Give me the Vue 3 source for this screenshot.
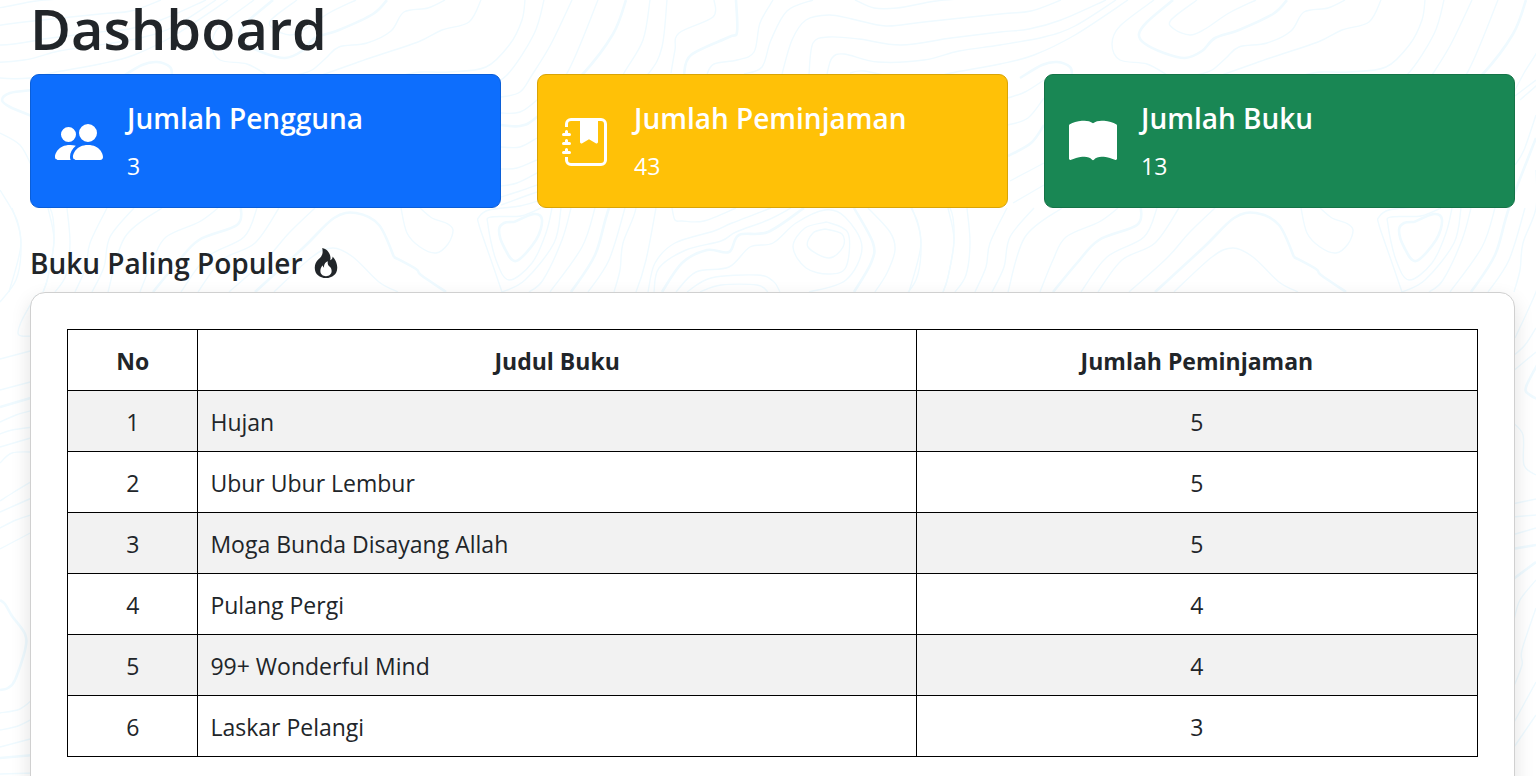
<script setup>
const cards = [
  {
    title: 'Jumlah Pengguna',
    value: 3,
    tone: 'blue',
    paths: [
      'M7 14s-1 0-1-1 1-4 5-4 5 3 5 4-1 1-1 1zm4-6a3 3 0 1 0 0-6 3 3 0 0 0 0 6m-5.784 6A2.24 2.24 0 0 1 5 13c0-1.355.68-2.75 1.936-3.72A6.3 6.3 0 0 0 5 9c-4 0-5 3-5 4s1 1 1 1zM4.5 8a2.5 2.5 0 1 0 0-5 2.5 2.5 0 0 0 0 5',
    ],
  },
  {
    title: 'Jumlah Peminjaman',
    value: 43,
    tone: 'yellow',
    paths: [
      'M6 1h6v7a.5.5 0 0 1-.757.429L9 7.083 6.757 8.43A.5.5 0 0 1 6 8z',
      'M3 0h10a2 2 0 0 1 2 2v12a2 2 0 0 1-2 2H3a2 2 0 0 1-2-2v-1h1v1a1 1 0 0 0 1 1h10a1 1 0 0 0 1-1V2a1 1 0 0 0-1-1H3a1 1 0 0 0-1 1v1H1V2a2 2 0 0 1 2-2',
      'M1 5v-.5a.5.5 0 0 1 1 0V5h.5a.5.5 0 0 1 0 1h-2a.5.5 0 0 1 0-1zm0 3v-.5a.5.5 0 0 1 1 0V8h.5a.5.5 0 0 1 0 1h-2a.5.5 0 0 1 0-1zm0 3v-.5a.5.5 0 0 1 1 0v.5h.5a.5.5 0 0 1 0 1h-2a.5.5 0 0 1 0-1z',
    ],
  },
  {
    title: 'Jumlah Buku',
    value: 13,
    tone: 'green',
    paths: [
      'M8 1.783C7.015.936 5.587.81 4.287.94c-1.514.153-3.042.672-3.994 1.105A.5.5 0 0 0 0 2.5v11a.5.5 0 0 0 .707.455c.882-.4 2.303-.881 3.68-1.02 1.409-.142 2.59.087 3.223.877a.5.5 0 0 0 .78 0c.633-.79 1.814-1.019 3.222-.877 1.378.139 2.8.62 3.681 1.02A.5.5 0 0 0 16 13.5v-11a.5.5 0 0 0-.293-.455c-.952-.433-2.48-.952-3.994-1.105C10.413.809 8.985.936 8 1.783',
    ],
  },
]

const books = [
  { title: 'Hujan', loans: 5 },
  { title: 'Ubur Ubur Lembur', loans: 5 },
  { title: 'Moga Bunda Disayang Allah', loans: 5 },
  { title: 'Pulang Pergi', loans: 4 },
  { title: '99+ Wonderful Mind', loans: 4 },
  { title: 'Laskar Pelangi', loans: 3 },
]

// Contour lines of one 900px tile, as x,y points joined by smooth curves.
const thin = [
  '254,0 220,26 212,44 220,60 247,64 267,75',
  '297,0 271,20 274,29 290,35 305,29 329,13 356,0',
  '445,0 428,8 404,12 391,31 367,43 339,47 326,58 312,70 297,75',
  '481,0 469,22 442,30 418,42 370,58 322,75',
  '525,0 522,20 510,44 486,67 449,72 421,72 403,75',
  '544,0 534,34 507,75 480,90',
  '572,0 551,44 532,75 520,92 501,97 480,98',
  '598,0 566,75 537,100 520,112 501,113 480,110',
  '650,0 643,40 624,73 610,100',
  '667,0 662,47 649,73 620,100',
  '714,0 713,17 679,33 675,50 671,73',
  '773,0 760,23 754,52 737,60 714,64 707,74',
  '813,0 787,11 771,40 762,67 744,74',
  '782,74 792,40 806,20 829,15 852,19 886,26 924,22 1000,14 1031,11 1061,0',
  '809,74 813,43 829,37 859,39 901,45 951,38 1000,32 1029,29 1061,20 1106,0',
  '827,74 832,58 844,54 878,62 924,60 959,51 1000,45 1044,37 1075,26 1116,0',
  '850,73 864,71 900,78 930,78 951,73 1000,64 1034,55 1075,35 1128,0',
  '855,0 874,8 897,8 936,1 974,-2',
  '0,133 20,145 32,167',
  '0,190 17,220 21,250 16,280 0,302',
  '32,200 50,208 54,240 48,277 43,292',
  '108,98 125,92 144,80',
  '108,125 128,118 144,98',
  '110,181 144,163',
  '113,203 144,185',
  '537,138 520,147 501,147',
  '537,160 517,168 501,169',
  '537,173 517,183 501,186',
  '537,185 520,191 501,197',
  '537,192 520,198 501,205',
  '636,80 615,96',
  '636,115 624,150 615,165',
  '401,208 407,233 420,247 436,253 448,244 453,230 446,223 432,218 420,208',
  '541,200 520,206 489,210 479,217 479,225 491,260 502,292',
  '541,208 521,216 491,217 488,225 496,260 509,280 532,263 546,233 552,208',
  '561,208 554,243 525,280 502,292',
  '571,208 562,240 543,280 529,292',
  '595,208 582,247 550,292',
  '625,208 609,260 588,292',
  '636,170 636,208 623,243 620,270 614,292',
  '656,208 646,260 636,292 615,338',
  '736,208 704,221 682,221 675,220 672,208',
  '771,208 732,223 714,231 675,243 655,263 648,292',
  '791,208 768,220 736,232 721,241 686,250 659,268 654,292',
  '676,292 696,272 729,267 750,247 773,243 796,223 825,210 845,217 862,247 846,280 809,292',
  '825,229 842,234 843,247 829,258 808,247 813,233 825,229',
  '827,222 848,233 846,267 829,274 806,268 793,247 805,228 827,222',
  '687,292 711,278 757,275 773,281 780,292',
  '700,292 721,285 757,285 768,292',
  '868,208 890,232 895,250 887,273 875,292',
  '912,208 921,243 909,292',
  '948,208 954,240 948,277 943,292',
  '67,208 70,243 66,275 55,292',
  '107,208 90,243 86,267 75,292',
  '134,208 110,237 104,267 92,292',
  '162,208 125,237 108,292',
  '218,208 199,222 166,237 153,260 140,292',
  '257,208 244,237 207,257 181,292',
  '279,208 255,243 222,260 198,292',
  '315,208 289,233 267,258 229,292',
  '274,292 312,257 333,248 353,257 379,282 398,292',
  '36,295 22,320 18,333 22,336 34,336',
  '0,359 34,350',
  '0,390 34,381',
  '0,422 16,415 34,410',
  '0,434 12,430 34,427',
  '0,447 34,437',
  '0,463 12,453 34,452',
  '0,501 14,492 34,480',
  '0,512 34,497',
  '0,528 16,520 34,514',
  '0,549 34,531',
  '0,713 20,709 34,698',
  '0,730 18,726 34,718',
  '0,747 34,738',
  '0,774 34,773',
  '636,328 625,345 612,357',
  '636,352 612,372',
  '612,422 623,435 624,465 636,475',
  '612,504 636,499',
  '612,517 636,515',
  '612,535 636,528',
  '636,580 620,600 614,620',
  '636,608 622,650 622,665 614,686',
  '636,682 612,726',
  '636,715 612,750',
]
const thick = [
  '273,0 247,22 239,34 244,43 264,53 285,58 302,51 315,38 339,30 373,14 387,0',
  '626,0 613,34 582,75 537,117 520,126 501,125',
  '736,0 737,32 729,37 691,55 684,74',
  '120,78 142,65 157,62 170,67 172,76',
  '32,90 10,93 2,100 10,107 32,116',
  '108,156 131,143 144,125',
  '636,138 609,208 595,255 571,292',
  '394,257 416,269 421,275 446,292',
  '514,222 534,214 542,220 536,240 516,261 504,247 499,230 504,223 514,222',
  '804,208 768,232 739,235 729,252 707,250 682,263 662,292',
  '854,208 873,243 871,263 854,292',
  '241,208 237,225 199,240 177,263 153,292',
  '255,292 304,247 334,218 356,213 379,225 394,257',
  '0,407 34,397',
  '0,600 5,604 12,616 25,634 25,650 15,680 8,688 0,690',
  '0,758 34,755',
  '640,360 626,387 630,395 640,400',
  '612,549 636,545',
  '612,580 636,562',
]

function curve(text) {
  const p = text.split(' ').map((pair) => pair.split(',').map(Number))
  let d = `M${p[0]}`
  for (let i = 0; i < p.length - 1; i++) {
    const a = p[i - 1] || p[i]
    const b = p[i]
    const c = p[i + 1]
    const e = p[i + 2] || c
    d += `C${b[0] + (c[0] - a[0]) / 6},${b[1] + (c[1] - a[1]) / 6} ${c[0] - (e[0] - b[0]) / 6},${c[1] - (e[1] - b[1]) / 6} ${c}`
  }
  return d
}
const thinPath = thin.map(curve).join('')
const thickPath = thick.map(curve).join('')
</script>

<template>
  <main class="page">
    <svg class="contours" aria-hidden="true">
      <defs>
        <g id="contour-tile" fill="none">
          <path :d="thinPath" stroke-width="1.4" />
          <path :d="thickPath" stroke-width="2.6" />
        </g>
      </defs>
      <use v-for="n in 4" :key="n" href="#contour-tile" :x="(n - 2) * 900" />
    </svg>

    <h1>Dashboard</h1>

    <section class="cards">
      <article v-for="card in cards" :key="card.title" class="card" :class="card.tone">
        <svg class="card-icon" viewBox="0 0 16 16" fill="currentColor" aria-hidden="true">
          <path v-for="d in card.paths" :key="d" :d="d" />
        </svg>
        <div>
          <h2>{{ card.title }}</h2>
          <p>{{ card.value }}</p>
        </div>
      </article>
    </section>

    <h2 class="popular">
      Buku Paling Populer
      <svg class="fire" viewBox="0 0 16 16" fill="currentColor" aria-hidden="true">
        <path d="M8 16c3.314 0 6-2 6-5.5 0-1.5-.5-4-2.5-6 .25 1.5-1.25 2-1.25 2C11 4 9 .5 6 0c.357 2 .5 4-2 6-1.25 1-2 2.729-2 4.5C2 14 4.686 16 8 16m0-1c-1.657 0-3-1-3-2.75 0-.75.25-2 1.25-3C6.125 10 7 10.5 7 10.5c-.375-1.25.5-3.25 2-3.5-.179 1-.25 2 1 3 .625.5 1 1.364 1 2.25C11 14 9.657 15 8 15" />
      </svg>
    </h2>

    <section class="panel">
      <table>
        <colgroup>
          <col class="col-no" />
          <col class="col-title" />
          <col />
        </colgroup>
        <thead>
          <tr>
            <th scope="col">No</th>
            <th scope="col">Judul Buku</th>
            <th scope="col">Jumlah Peminjaman</th>
          </tr>
        </thead>
        <tbody>
          <tr v-for="(book, i) in books" :key="book.title">
            <td>{{ i + 1 }}</td>
            <td class="title">{{ book.title }}</td>
            <td>{{ book.loans }}</td>
          </tr>
        </tbody>
      </table>
    </section>
  </main>
</template>

<style>
body {
  margin: 0;
  background: #fff;
}
</style>

<style scoped>
.page {
  position: relative;
  isolation: isolate;
  box-sizing: border-box;
  min-height: 100vh;
  padding: 0 21px 0 30px;
  color: #212529;
  font-family: "Segoe UI", "Open Sans", "Noto Sans", sans-serif;
  font-size: 23px;
  line-height: 36px;
}
.contours {
  position: absolute;
  inset: 0;
  z-index: -1;
  width: 100%;
  height: 100%;
  stroke: #effaff;
}
h1,
h2,
p {
  margin: 0;
}
h1 {
  margin-bottom: 18px;
  font-size: 56px;
  font-weight: 600;
  line-height: 56px;
}
h2 {
  font-size: 28px;
  font-weight: 600;
  line-height: 36px;
}
.cards {
  display: grid;
  grid-template-columns: repeat(3, 1fr);
  gap: 36px;
}
.card {
  display: flex;
  align-items: center;
  gap: 24px;
  padding: 25px 24px 23px;
  border: 1px solid;
  border-radius: 9px;
  color: #fff;
}
.card h2 {
  margin-bottom: 12px;
}
.card-icon {
  width: 48px;
  height: 48px;
  flex: none;
}
.blue {
  background: #0d6efd;
  border-color: #0b5ed7;
}
.yellow {
  background: #ffc107;
  border-color: #d9a406;
}
.green {
  background: #198754;
  border-color: #157347;
}
.popular {
  display: flex;
  align-items: center;
  gap: 8px;
  margin: 37px 0 11px;
}
.fire {
  width: 30px;
  height: 30px;
}
.panel {
  padding: 36px 36px 60px;
  border: 1px solid #d0d0d0;
  border-radius: 15px;
  background: #fff;
  box-shadow: 0 8px 20px rgba(0, 0, 0, 0.12);
}
table {
  width: 100%;
  border-collapse: collapse;
  table-layout: fixed;
}
.col-no {
  width: 9.25%;
}
.col-title {
  width: 50.95%;
}
th,
td {
  padding: 13px 12px 11px;
  border: 1px solid #000;
  text-align: center;
}
th {
  font-weight: 700;
}
tbody tr:nth-child(odd) {
  background: #f2f2f2;
}
.title {
  text-align: left;
}
</style>
